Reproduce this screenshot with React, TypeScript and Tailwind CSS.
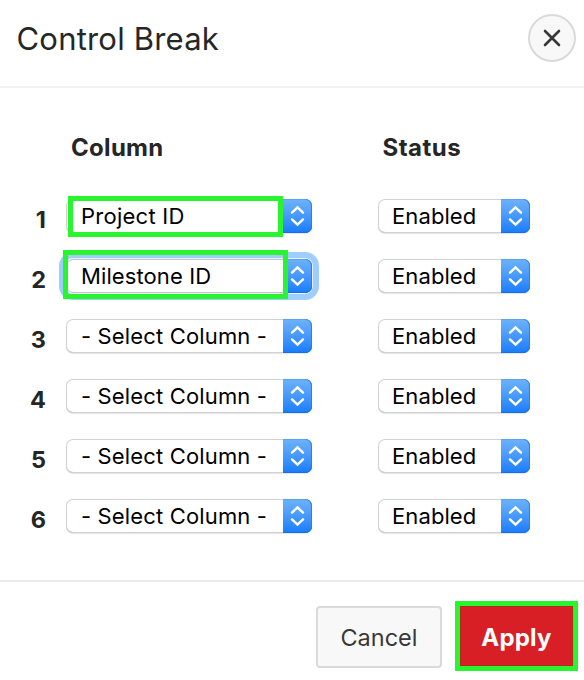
const rows = [
  { n: 1, label: "Project ID", mark: "first", spacing: "tracking-[0.25px]" },
  { n: 2, label: "Milestone ID", mark: "second", spacing: "tracking-[0.1px]" },
  { n: 3, label: "- Select Column -", mark: "", spacing: "tracking-[0.15px]" },
  { n: 4, label: "- Select Column -", mark: "", spacing: "tracking-[0.15px]" },
  { n: 5, label: "- Select Column -", mark: "", spacing: "tracking-[0.15px]" },
  { n: 6, label: "- Select Column -", mark: "", spacing: "tracking-[0.15px]" },
];

function Stepper() {
  return (
    <span className="flex h-[34px] w-[29px] shrink-0 items-center justify-center rounded-r-[7px] bg-linear-to-b from-[#6db3fa] to-[#157cfb] shadow-[inset_0_-1px_0_#1470e8,inset_-1px_0_0_#2c80e8,inset_0_1px_0_#5ba3ee]">
      <svg width="15" height="22" viewBox="0 0 15 22" fill="none" stroke="white" strokeWidth="2.4" strokeLinecap="round" strokeLinejoin="miter">
        <path d="M2 7.6 7.5 2.4 13 7.6M2 14.4 7.5 19.6 13 14.4" />
      </svg>
    </span>
  );
}

function Select({ label, width, text, focus = false }: { label: string; width: string; text: string; focus?: boolean }) {
  return (
    <div
      className={`flex h-[34px] ${width} shrink-0 items-center rounded-[7px] bg-white ${
        focus
          ? "shadow-[inset_0_0_0_1px_#c6c6c6,0_0_0_1px_#e9f3ff,0_0_0_7px_#a0cdff]"
          : "shadow-[inset_0_0_0_1px_#d2d2d2,inset_0_-1px_0_#b8b8b8,0_1px_1px_#0000001c]"
      }`}
    >
      <span className={`flex-1 whitespace-nowrap text-[22px] leading-[34px] text-black ${text}`}>{label}</span>
      <Stepper />
    </div>
  );
}

export default function App() {
  return (
    <div className="flex h-[680px] w-[584px] flex-col overflow-hidden bg-white font-['Inter','Liberation_Sans',sans-serif] text-[#262626]">
      <header className="flex h-[88px] shrink-0 items-start justify-between border-b-2 border-[#f2f2f2] pl-[16.5px] pr-[8px] pt-[14px]">
        <h1 className="pt-px text-[31px] font-normal leading-[48px] tracking-[0.2px]">Control Break</h1>
        <button className="flex size-12 items-center justify-center rounded-full border-2 border-[#dadada] bg-[#f8f8f8]">
          <svg width="18" height="18" viewBox="0 0 18 18" stroke="#383838" strokeWidth="2.6" strokeLinecap="round">
            <path d="M2 2 16 16M16 2 2 16" />
          </svg>
        </button>
      </header>

      <main className="h-[492px] shrink-0">
        <div className="flex h-[98px] pt-[44px] text-[24px] font-bold leading-[32px]">
          <span className="w-[312px] pl-[71px] tracking-[0.3px]">Column</span>
          <span className="pl-[70.5px] tracking-[0.5px]">Status</span>
        </div>
        {rows.map((r) => (
          <div key={r.n} className="flex h-[60px] items-center">
            <span className="w-[66px] pr-[20px] pt-[8px] text-right text-[23.5px] font-bold leading-[32px]">{r.n}</span>
            <div className="relative">
              <Select label={r.label} width="w-[246px]" text={`pl-[15px] ${r.spacing}`} focus={r.mark === "second"} />
              {r.mark === "first" && (
                <span className="absolute -top-[3px] left-[2px] h-[41px] w-[215px] border-5 border-[#28f52d]" />
              )}
              {r.mark === "second" && (
                <span className="absolute -left-[3px] -top-[9px] h-[49px] w-[225px] border-5 border-[#28f52d]" />
              )}
            </div>
            <div className="pl-[66px]">
              <Select label="Enabled" width="w-[152px]" text="pl-[14px] tracking-[0.1px]" />
            </div>
          </div>
        ))}
      </main>

      <footer className="flex h-[100px] shrink-0 items-start justify-end gap-[13px] border-t-2 border-[#ebebeb] pr-[6px] pt-[19px]">
        <button className="mt-[5px] h-[62px] w-[126px] rounded-[4px] border-2 border-[#dadada] bg-[#f8f8f8] pt-[2px] text-[23.5px] text-[#383838]">
          Cancel
        </button>
        <button className="h-[70px] w-[123px] border-5 border-[#28f52d] bg-[#d91f26] pt-[3px] text-[24px] font-bold tracking-[0.2px] text-white shadow-[inset_0_0_0_1px_#b52a1c]">
          Apply
        </button>
      </footer>
    </div>
  );
}
